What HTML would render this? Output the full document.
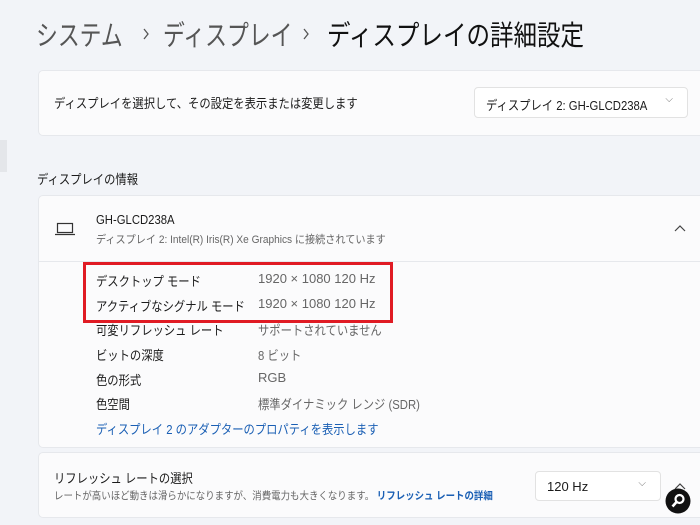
<!DOCTYPE html>
<html><head><meta charset="utf-8"><style>
*{margin:0;padding:0;box-sizing:border-box}
body{width:700px;height:525px;overflow:hidden;background:#f2f4f8;font-family:"Liberation Sans","Noto Sans CJK JP",sans-serif;color:#1b1b1b;position:relative}
.a{position:absolute;white-space:nowrap}
.c{transform:scaleX(.87);transform-origin:0 50%}
.card{position:absolute;left:38px;width:680px;background:#fbfbfc;border:1px solid #e6e8ec;border-radius:5px}
.dd{position:absolute;background:#fff;border:1px solid #e2e2e2;border-radius:4px;font-size:13px}
.k{left:96px;font-size:13px}
.v{left:258px;font-size:13px;color:#666}
.t{top:14px;font-size:28px;transform:scaleX(.78);transform-origin:0 50%}
</style></head><body>
<div class="a t" style="left:36px;color:#555">システム</div>
<svg class="a" style="left:142px;top:28px" width="8" height="12"><path d="M2 1L6 6L2 11" fill="none" stroke="#555" stroke-width="1.3"/></svg>
<div class="a t" style="left:163px;color:#555">ディスプレイ</div>
<svg class="a" style="left:302px;top:28px" width="8" height="12"><path d="M2 1L6 6L2 11" fill="none" stroke="#555" stroke-width="1.3"/></svg>
<div class="a t" style="left:327px;color:#111;transform:scaleX(.84)">ディスプレイの詳細設定</div>
<div class="a" style="left:0;top:140px;width:7px;height:32px;background:#e4e6ea"></div>
<div class="card" style="top:70px;height:66px"></div>
<div class="a c" style="left:54px;top:93px;font-size:13px">ディスプレイを選択して、その設定を表示または変更します</div>
<div class="dd" style="left:474px;top:87px;width:214px;height:31px"><span class="a c" style="left:11px;top:7px">ディスプレイ 2: GH-GLCD238A</span><span style="position:absolute;right:14px;top:6px;color:#777;font-size:10px">⌵</span></div>
<div class="a c" style="left:37px;top:169px;font-size:13px">ディスプレイの情報</div>
<div class="card" style="top:195px;height:253px"></div>
<div class="a" style="left:39px;top:261px;width:680px;height:1px;background:#e6e8ec"></div>
<svg class="a" style="left:55px;top:222px" width="20" height="14"><rect x="2.5" y="1.5" width="15" height="9" fill="none" stroke="#333" stroke-width="1.2"/><line x1="0" y1="12.5" x2="20" y2="12.5" stroke="#333" stroke-width="1.2"/></svg>
<div class="a c" style="left:96px;top:212px;font-size:13px">GH-GLCD238A</div>
<div class="a" style="left:96px;top:231px;font-size:11px;color:#666;transform:scaleX(.92);transform-origin:0 50%">ディスプレイ 2: Intel(R) Iris(R) Xe Graphics に接続されています</div>
<svg class="a" style="left:674px;top:224px" width="12" height="8"><path d="M1 7L6 2L11 7" fill="none" stroke="#444" stroke-width="1.2"/></svg>
<div class="a k c" style="top:271px">デスクトップ モード</div><div class="a v" style="top:271px">1920 × 1080 120 Hz</div>
<div class="a k c" style="top:296px">アクティブなシグナル モード</div><div class="a v" style="top:296px">1920 × 1080 120 Hz</div>
<div class="a k c" style="top:320px">可変リフレッシュ レート</div><div class="a v c" style="top:320px">サポートされていません</div>
<div class="a k c" style="top:345px">ビットの深度</div><div class="a v c" style="top:345px">8 ビット</div>
<div class="a k c" style="top:370px">色の形式</div><div class="a v" style="top:370px">RGB</div>
<div class="a k c" style="top:394px">色空間</div><div class="a v c" style="top:394px">標準ダイナミック レンジ (SDR)</div>
<div class="a c" style="left:96px;top:419px;font-size:13px;color:#1a5fb4">ディスプレイ 2 のアダプターのプロパティを表示します</div>
<div class="a" style="left:83px;top:262px;width:310px;height:61px;border:3px solid #e01b24"></div>
<div class="card" style="top:452px;height:66px"></div>
<div class="a c" style="left:54px;top:468px;font-size:13px">リフレッシュ レートの選択</div>
<div class="a" style="left:54px;top:488px;font-size:10.5px;color:#666;transform:scaleX(.9);transform-origin:0 50%">レートが高いほど動きは滑らかになりますが、消費電力も大きくなります。 <span style="color:#1a5fb4;font-weight:bold">リフレッシュ レートの詳細</span></div>
<div class="dd" style="left:535px;top:471px;width:126px;height:30px;padding:7px 11px">120 Hz<span style="position:absolute;right:14px;top:6px;color:#777;font-size:10px">⌵</span></div>
<svg class="a" style="left:674px;top:482px" width="12" height="8"><path d="M1 7L6 2L11 7" fill="none" stroke="#444" stroke-width="1.2"/></svg>
<svg class="a" style="left:665px;top:488px" width="26" height="26"><circle cx="13" cy="13" r="12.5" fill="#111"/><circle cx="14.5" cy="11" r="4" fill="none" stroke="#fff" stroke-width="2.2"/><line x1="11.5" y1="14" x2="7.5" y2="18.5" stroke="#fff" stroke-width="2.6"/></svg>
</body></html>
